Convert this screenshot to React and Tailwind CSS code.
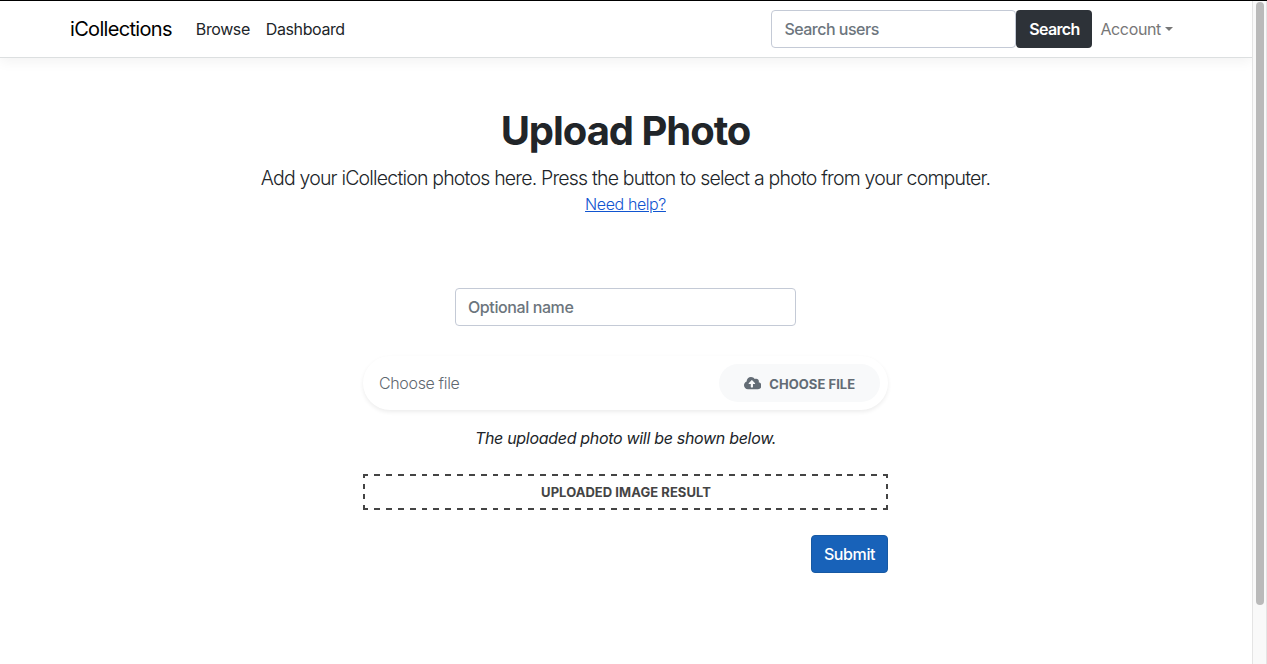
import { FaCloudUploadAlt } from "react-icons/fa";

function Navbar() {
  return (
    <nav className="relative flex h-[57px] items-center border-b border-[#dcdfe0] bg-white pl-[70px] pr-[79px] shadow-[0_4px_12px_0_rgba(0,0,0,0.05)]">
      <a className="mr-6 whitespace-nowrap text-[20px] leading-[30px] tracking-[-0.68px] text-black">iCollections</a>
      <div className="flex gap-4 text-[#212529]">
        <a className="tracking-[-0.4px]">Browse</a>
        <a className="tracking-[-0.4px]">Dashboard</a>
      </div>
      <form className="ml-auto flex">
        <input
          placeholder="Search users"
          className="h-[38px] w-[245px] rounded-[4px] border border-[#c4cad6] px-3 font-medium tracking-[-0.5px] outline-none placeholder:text-[#6c757d]"
        />
        <button type="button" className="h-[38px] w-[76px] rounded-[4px] bg-[#2d3238] font-semibold tracking-[-0.65px] text-white">
          Search
        </button>
      </form>
      <a className="ml-[8px] flex items-center whitespace-nowrap tracking-[-0.35px] text-[#777777]">
        Account
        <span className="ml-1 border-x-[4.8px] border-t-[4.8px] border-x-transparent border-t-[#777777]" />
      </a>
    </nav>
  );
}

export default function App() {
  return (
    <div className="flex h-[664px] w-[1267px] overflow-hidden border-t border-black bg-white font-['Inter',sans-serif] text-[16px] leading-6 text-[#212529]">
      <div className="flex w-[1252px] flex-col overflow-hidden">
        <Navbar />
        <main className="flex w-[1251px] flex-col items-center pt-[49px]">
          <h1 className="text-[40px] font-bold leading-[48px] tracking-[-1.05px]">Upload Photo</h1>
          <p className="mt-[8px] whitespace-nowrap text-[19.5px] font-light leading-[30px] tracking-[-0.81px]">
            Add your iCollection photos here. Press the button to select a photo from your computer.
          </p>
          <a className="-mt-px font-light tracking-[-0.4px] text-[#1155d0] underline">Need help?</a>
          <input
            placeholder="Optional name"
            className="mt-[72px] h-[38px] w-[341px] rounded-[4px] border border-[#c4cad6] px-3 font-medium tracking-[-0.4px] outline-none placeholder:text-[#6c757d]"
          />
          <section className="flex w-[525px] flex-col">
            <div className="mt-[30px] flex h-[54px] items-center justify-between rounded-full bg-white pl-4 pr-2 shadow-[0_2px_4px_rgba(0,0,0,0.075)]">
              <span className="font-light tracking-[-0.35px] text-[#5f6870]">Choose file</span>
              <button type="button" className="flex h-[38px] w-[161px] items-center justify-center rounded-full bg-[#f8f9fa] text-[#636c75]">
                <FaCloudUploadAlt className="mr-2 h-[14px] w-[17.5px]" />
                <span className="pt-px text-[13px] font-bold leading-5 tracking-[0.05px]">CHOOSE FILE</span>
              </button>
            </div>
            <p className="mt-4 text-center italic tracking-[-0.31px]">The uploaded photo will be shown below.</p>
            <div className="mt-6 flex h-[36px] items-center justify-center bg-[repeating-linear-gradient(90deg,#444_0_5.3px,transparent_5.3px_11.2px,#444_11.2px_11.83px),repeating-linear-gradient(90deg,#444_0_5.3px,transparent_5.3px_11.2px,#444_11.2px_11.83px),repeating-linear-gradient(180deg,#444_0_4.5px,transparent_4.5px_10px,#444_10px_10.5px),repeating-linear-gradient(180deg,#444_0_4.5px,transparent_4.5px_10px,#444_10px_10.5px)] bg-no-repeat [background-position:0_0,0_100%,0_0,100%_0] [background-size:100%_2px,100%_2px,2px_100%,2px_100%] text-[13px] font-bold text-[#444444]">
              <span className="pb-px pl-px tracking-[0.05px]">UPLOADED IMAGE RESULT</span>
            </div>
            <button type="button" className="mt-[25px] h-[38px] w-[77px] self-end rounded-[4px] border border-[#1759a3] bg-[#1862b9] font-medium tracking-[-0.4px] text-white">
              Submit
            </button>
          </section>
        </main>
      </div>
      <div className="w-[15px] border-x border-[#e4e4e4] bg-[#f9f9f9] pt-px">
        <div className="mx-auto h-[603px] w-2 rounded-full bg-[#bababa]" />
      </div>
    </div>
  );
}
